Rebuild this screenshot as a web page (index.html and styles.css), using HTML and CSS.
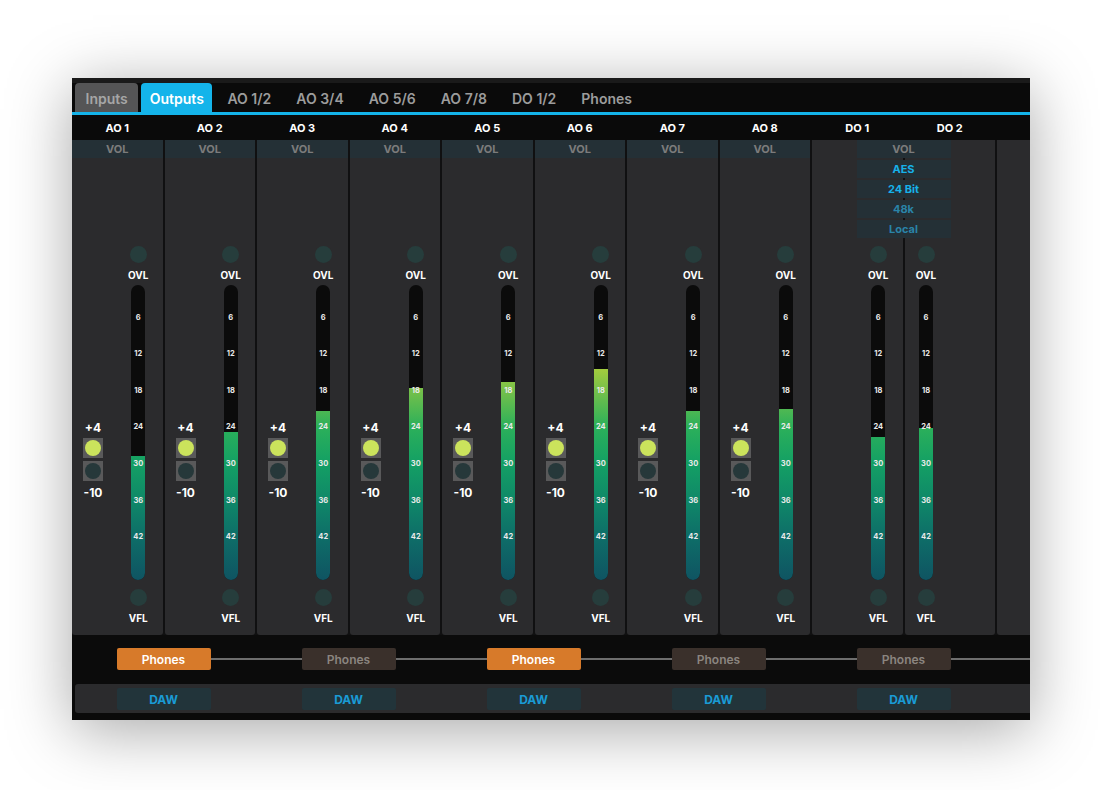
FILE: index.html
```html
<html lang="en">
<head>
<meta charset="UTF-8">
<title>Outputs</title>
<link rel="stylesheet" href="styles.css">
</head>
<body>

<div class="window">

  <div class="tabbar">
    <span class="tab tab-dim">Inputs</span>
    <span class="tab tab-active">Outputs</span>
    <span class="tab">AO 1/2</span>
    <span class="tab">AO 3/4</span>
    <span class="tab">AO 5/6</span>
    <span class="tab">AO 7/8</span>
    <span class="tab">DO 1/2</span>
    <span class="tab">Phones</span>
  </div>
  <div class="accent"></div>

  <div class="names">
    <span>AO 1</span><span>AO 2</span><span>AO 3</span><span>AO 4</span><span>AO 5</span>
    <span>AO 6</span><span>AO 7</span><span>AO 8</span><span>DO 1</span><span>DO 2</span><span></span>
  </div>

  <div class="strips">

    <!-- AO 1 -->
    <div class="strip">
      <div class="vol">VOL</div>
      <div class="strip-body">
        <div class="trim">
          <span class="trim-label">+4</span>
          <span class="trim-btn"><i class="on"></i></span>
          <span class="trim-btn"><i></i></span>
          <span class="trim-label">-10</span>
        </div>
        <div class="meter-col">
          <span class="led"></span>
          <span class="led-label">OVL</span>
          <div class="meter">
            <div class="meter-fill" style="height:124px"></div>
            <div class="meter-scale"><span>6</span><span>12</span><span>18</span><span>24</span><span>30</span><span>36</span><span>42</span></div>
          </div>
          <span class="led led-vfl"></span>
          <span class="led-label">VFL</span>
        </div>
      </div>
    </div>

    <!-- AO 2 -->
    <div class="strip">
      <div class="vol">VOL</div>
      <div class="strip-body">
        <div class="trim">
          <span class="trim-label">+4</span>
          <span class="trim-btn"><i class="on"></i></span>
          <span class="trim-btn"><i></i></span>
          <span class="trim-label">-10</span>
        </div>
        <div class="meter-col">
          <span class="led"></span>
          <span class="led-label">OVL</span>
          <div class="meter">
            <div class="meter-fill" style="height:148px"></div>
            <div class="meter-scale"><span>6</span><span>12</span><span>18</span><span>24</span><span>30</span><span>36</span><span>42</span></div>
          </div>
          <span class="led led-vfl"></span>
          <span class="led-label">VFL</span>
        </div>
      </div>
    </div>

    <!-- AO 3 -->
    <div class="strip">
      <div class="vol">VOL</div>
      <div class="strip-body">
        <div class="trim">
          <span class="trim-label">+4</span>
          <span class="trim-btn"><i class="on"></i></span>
          <span class="trim-btn"><i></i></span>
          <span class="trim-label">-10</span>
        </div>
        <div class="meter-col">
          <span class="led"></span>
          <span class="led-label">OVL</span>
          <div class="meter">
            <div class="meter-fill" style="height:169px"></div>
            <div class="meter-scale"><span>6</span><span>12</span><span>18</span><span>24</span><span>30</span><span>36</span><span>42</span></div>
          </div>
          <span class="led led-vfl"></span>
          <span class="led-label">VFL</span>
        </div>
      </div>
    </div>

    <!-- AO 4 -->
    <div class="strip">
      <div class="vol">VOL</div>
      <div class="strip-body">
        <div class="trim">
          <span class="trim-label">+4</span>
          <span class="trim-btn"><i class="on"></i></span>
          <span class="trim-btn"><i></i></span>
          <span class="trim-label">-10</span>
        </div>
        <div class="meter-col">
          <span class="led"></span>
          <span class="led-label">OVL</span>
          <div class="meter">
            <div class="meter-fill" style="height:192px"></div>
            <div class="meter-scale"><span>6</span><span>12</span><span>18</span><span>24</span><span>30</span><span>36</span><span>42</span></div>
          </div>
          <span class="led led-vfl"></span>
          <span class="led-label">VFL</span>
        </div>
      </div>
    </div>

    <!-- AO 5 -->
    <div class="strip">
      <div class="vol">VOL</div>
      <div class="strip-body">
        <div class="trim">
          <span class="trim-label">+4</span>
          <span class="trim-btn"><i class="on"></i></span>
          <span class="trim-btn"><i></i></span>
          <span class="trim-label">-10</span>
        </div>
        <div class="meter-col">
          <span class="led"></span>
          <span class="led-label">OVL</span>
          <div class="meter">
            <div class="meter-fill" style="height:198px"></div>
            <div class="meter-scale"><span>6</span><span>12</span><span>18</span><span>24</span><span>30</span><span>36</span><span>42</span></div>
          </div>
          <span class="led led-vfl"></span>
          <span class="led-label">VFL</span>
        </div>
      </div>
    </div>

    <!-- AO 6 -->
    <div class="strip">
      <div class="vol">VOL</div>
      <div class="strip-body">
        <div class="trim">
          <span class="trim-label">+4</span>
          <span class="trim-btn"><i class="on"></i></span>
          <span class="trim-btn"><i></i></span>
          <span class="trim-label">-10</span>
        </div>
        <div class="meter-col">
          <span class="led"></span>
          <span class="led-label">OVL</span>
          <div class="meter">
            <div class="meter-fill" style="height:211px"></div>
            <div class="meter-scale"><span>6</span><span>12</span><span>18</span><span>24</span><span>30</span><span>36</span><span>42</span></div>
          </div>
          <span class="led led-vfl"></span>
          <span class="led-label">VFL</span>
        </div>
      </div>
    </div>

    <!-- AO 7 -->
    <div class="strip">
      <div class="vol">VOL</div>
      <div class="strip-body">
        <div class="trim">
          <span class="trim-label">+4</span>
          <span class="trim-btn"><i class="on"></i></span>
          <span class="trim-btn"><i></i></span>
          <span class="trim-label">-10</span>
        </div>
        <div class="meter-col">
          <span class="led"></span>
          <span class="led-label">OVL</span>
          <div class="meter">
            <div class="meter-fill" style="height:169px"></div>
            <div class="meter-scale"><span>6</span><span>12</span><span>18</span><span>24</span><span>30</span><span>36</span><span>42</span></div>
          </div>
          <span class="led led-vfl"></span>
          <span class="led-label">VFL</span>
        </div>
      </div>
    </div>

    <!-- AO 8 -->
    <div class="strip">
      <div class="vol">VOL</div>
      <div class="strip-body">
        <div class="trim">
          <span class="trim-label">+4</span>
          <span class="trim-btn"><i class="on"></i></span>
          <span class="trim-btn"><i></i></span>
          <span class="trim-label">-10</span>
        </div>
        <div class="meter-col">
          <span class="led"></span>
          <span class="led-label">OVL</span>
          <div class="meter">
            <div class="meter-fill" style="height:171px"></div>
            <div class="meter-scale"><span>6</span><span>12</span><span>18</span><span>24</span><span>30</span><span>36</span><span>42</span></div>
          </div>
          <span class="led led-vfl"></span>
          <span class="led-label">VFL</span>
        </div>
      </div>
    </div>

    <!-- DO 1/2 pair -->
    <div class="pair">
      <div class="strip strip-do1">
        <div class="vol-blank"></div>
        <div class="strip-body">
          <div class="trim"></div>
          <div class="meter-col">
            <span class="led"></span>
            <span class="led-label">OVL</span>
            <div class="meter">
              <div class="meter-fill" style="height:143px"></div>
              <div class="meter-scale"><span>6</span><span>12</span><span>18</span><span>24</span><span>30</span><span>36</span><span>42</span></div>
            </div>
            <span class="led led-vfl"></span>
            <span class="led-label">VFL</span>
          </div>
        </div>
      </div>
      <div class="strip strip-do2">
        <div class="vol-blank"></div>
        <div class="strip-body">
          <div class="meter-col meter-col-left">
            <span class="led"></span>
            <span class="led-label">OVL</span>
            <div class="meter">
              <div class="meter-fill" style="height:152px"></div>
              <div class="meter-scale"><span>6</span><span>12</span><span>18</span><span>24</span><span>30</span><span>36</span><span>42</span></div>
            </div>
            <span class="led led-vfl"></span>
            <span class="led-label">VFL</span>
          </div>
        </div>
      </div>
      <div class="digital-panel">
        <div class="dp-box dp-grey">VOL</div>
        <div class="dp-box dp-bright">AES</div>
        <div class="dp-box dp-bright">24 Bit</div>
        <div class="dp-box dp-dim">48k</div>
        <div class="dp-box dp-dim">Local</div>
      </div>
    </div>

    <!-- empty strip, cut off by the window -->
    <div class="strip"></div>

  </div>

  <div class="phones-row">
    <span class="phones-btn phones-on">Phones</span>
    <span class="phones-btn">Phones</span>
    <span class="phones-btn phones-on">Phones</span>
    <span class="phones-btn">Phones</span>
    <span class="phones-btn">Phones</span>
  </div>

  <div class="daw-row">
    <div class="daw-grid">
      <span class="daw-btn">DAW</span>
      <span class="daw-btn">DAW</span>
      <span class="daw-btn">DAW</span>
      <span class="daw-btn">DAW</span>
      <span class="daw-btn">DAW</span>
    </div>
  </div>

</div>

</body>
</html>
```

FILE: styles.css
```css
:root{
  --font: Inter, "Open Sans", sans-serif;
  --strip: #2b2b2d;
  --gapline: #101011;
  --black: #0a0a0a;
  --cyan: #14b4ea;
  --tile: #243036;
}

*{
  margin: 0;
  padding: 0;
  box-sizing: border-box;
}

body {
  background-color: #fff;
  font-family: var(--font);
}

.window {
  width: 958px;
  height: 642px;
  margin: 78px 0 0 72px;
  background-color: var(--black);
  overflow: hidden;
  box-shadow: 0 10px 60px rgba(0,0,0,0.35);
}

/* tabs */
.tabbar {
  height: 34px;
  padding-left: 3px;
  display: flex;
  align-items: stretch;
  gap: 3px;
  background-color: var(--black);
  border-top: 5px solid #1a1a1a;
}

.tab {
  display: flex;
  align-items: center;
  padding: 2px 11px 0;
  font-size: 14px;
  font-weight: 600;
  color: #9c9c9c;
  border-radius: 4px 4px 0 0;
}

.tab-dim {
  background-color: #555556;
  color: #a6a6a6;
  padding: 2px 10.5px 0;
}

.tab-active {
  background-color: var(--cyan);
  color: #fff;
  padding: 2px 8.5px 0;
  margin-right: 1px;
}

.accent {
  height: 3px;
  background-color: var(--cyan);
}

/* channel names */
.names {
  height: 25px;
  display: grid;
  grid-template-columns: repeat(11, 90.5px);
  column-gap: 2px;
  align-items: center;
  justify-items: center;
  font-size: 11px;
  font-weight: 700;
  color: #fff;
}

/* strips */
.strips {
  height: 495px;
  display: grid;
  grid-template-columns: repeat(8, 90.5px) 183px 90.5px;
  column-gap: 2px;
  background-color: var(--gapline);
}

.strip {
  background-color: var(--strip);
  border-radius: 0 0 3px 3px;
  display: flex;
  flex-direction: column;
}

.vol, .vol-blank {
  height: 18px;
  flex: none;
}

.vol {
  background-color: var(--tile);
  color: #7c7c7c;
  font-size: 11px;
  font-weight: 700;
  display: flex;
  align-items: center;
  justify-content: center;
}

.strip-body {
  flex: 1;
  display: flex;
}

.trim {
  width: 42px;
  display: flex;
  flex-direction: column;
  align-items: center;
}

.trim-label {
  margin-top: 263px;
  height: 14px;
  line-height: 14px;
  font-size: 12px;
  font-weight: 700;
  color: #fff;
}

.trim-btn {
  margin-top: 3px;
  width: 20px;
  height: 20px;
  background-color: #59595a;
  display: flex;
  align-items: center;
  justify-content: center;
}

.trim-btn i {
  width: 16px;
  height: 16px;
  border-radius: 50%;
  background-color: #26383a;
}

.trim-btn i.on {
  background-color: #cbe35c;
}

.trim-btn + .trim-label {
  margin-top: 5px;
}

.meter-col {
  flex: 1;
  display: flex;
  flex-direction: column;
  align-items: center;
}

.meter-col-left {
  flex: none;
  width: 43px;
}

.led {
  margin-top: 88px;
  width: 17px;
  height: 17px;
  border-radius: 50%;
  background-color: #263d3c;
}

.led-vfl {
  margin-top: 9px;
}

.led-label {
  margin-top: 6px;
  height: 12px;
  line-height: 12px;
  font-size: 10px;
  font-weight: 700;
  color: #fff;
}

.meter {
  position: relative;
  margin-top: 4px;
  width: 14px;
  height: 295px;
  border-radius: 7px;
  background-color: #0b0b0b;
  overflow: hidden;
  display: flex;
  flex-direction: column;
  justify-content: flex-end;
}

.meter-fill {
  width: 100%;
  background: linear-gradient(to top, #0f5462 0%, #0e6e68 15%, #0f8868 27%, #14a064 40%, #2cb05a 52%, #74c04a 64%, #a6cd3d 72%, #bfd83a 100%);
  background-size: 100% 295px;
  background-position: bottom;
}

.meter-scale {
  position: absolute;
  inset: 0;
  padding-top: 13.7px;
  display: flex;
  flex-direction: column;
}

.meter-scale span {
  height: 36.67px;
  display: flex;
  align-items: center;
  justify-content: center;
  font-size: 7.5px;
  font-weight: 700;
  color: #e9e9e9;
}

/* DO 1/2 stereo pair */
.pair {
  display: grid;
  grid-template-columns: 90.5px 90.5px;
  column-gap: 2px;
}

.strip-do1 {
  grid-area: 1 / 1;
}

.strip-do2 {
  grid-area: 1 / 2;
}

.digital-panel {
  grid-area: 1 / 1 / 2 / 3;
  justify-self: center;
  align-self: start;
  width: 94px;
  display: flex;
  flex-direction: column;
  gap: 2px;
  z-index: 1;
}

.dp-box {
  height: 18px;
  background-color: var(--tile);
  font-size: 11px;
  font-weight: 700;
  display: flex;
  align-items: center;
  justify-content: center;
}

.dp-grey {
  color: #7c7c7c;
}

.dp-bright {
  color: #17b2ea;
}

.dp-dim {
  color: #2a84a8;
}

/* phones routing */
.phones-row {
  height: 49px;
  padding-top: 13px;
  display: grid;
  grid-template-columns: repeat(11, 90.5px);
  column-gap: 2px;
  align-items: start;
  background: linear-gradient(#6e6e6e, #6e6e6e) 138px 23px / 100% 2px no-repeat, #0b0b0b;
}

.phones-btn, .daw-btn {
  grid-column: span 2;
  justify-self: center;
  width: 94px;
  height: 22px;
  border-radius: 2px;
  font-size: 12px;
  font-weight: 600;
  display: flex;
  align-items: center;
  justify-content: center;
}

.phones-btn {
  background-color: #3a302b;
  color: #8b8580;
}

.phones-on {
  background-color: #d77a2a;
  color: #fff;
}

.daw-row {
  height: 29px;
  margin-left: 3px;
  background-color: var(--strip);
  border-radius: 3px 0 0 3px;
}

.daw-grid {
  margin-left: -3px;
  padding-top: 4px;
  display: grid;
  grid-template-columns: repeat(11, 90.5px);
  column-gap: 2px;
}

.daw-btn {
  background-color: #22343a;
  color: #1a9bd5;
  font-weight: 700;
}
```
